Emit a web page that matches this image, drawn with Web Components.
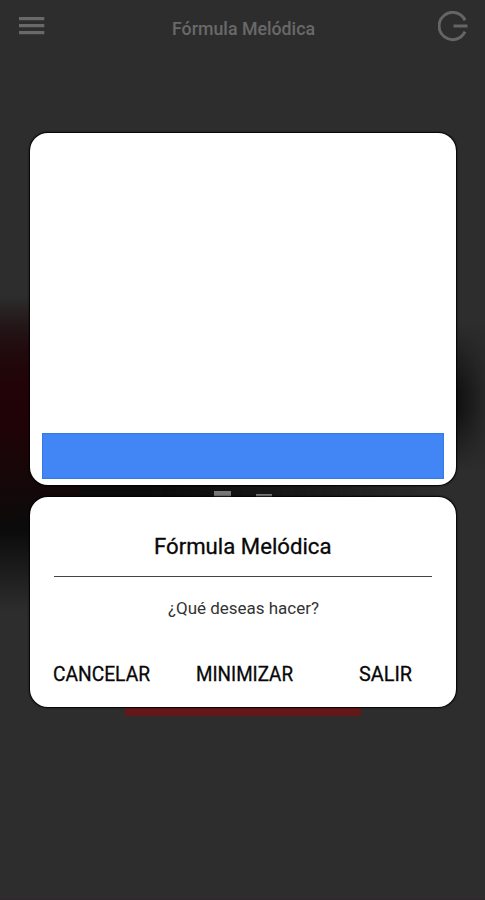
<!DOCTYPE html>
<html lang="es">
<head>
<meta charset="utf-8">
<title>Fórmula Melódica</title>
<style>
body{margin:0;background:#2d2d2d;font-family:Roboto,"Liberation Sans",sans-serif;overflow:hidden}
</style>
</head>
<body>
<radio-app></radio-app>
<script>
const define = (name, html, init) => customElements.define(name, class extends HTMLElement {
  constructor(){
    super();
    const t = document.createElement('template');
    t.innerHTML = html;
    this.attachShadow({mode:'open'}).append(t.content.cloneNode(true));
  }
  connectedCallback(){ if(init) init(this, this.shadowRoot); }
});

// A single line of text fitted to a given width.
define('fit-text', `<style>:host{display:block}svg{display:block;overflow:visible}text{fill:currentColor;stroke:currentColor;stroke-width:var(--heft,0)}</style>
<svg><text x="0"></text></svg>`, (el, root) => {
  const w = el.getAttribute('width'), s = el.getAttribute('size');
  const svg = root.querySelector('svg'), t = root.querySelector('text');
  svg.setAttribute('width', w); svg.setAttribute('height', s);
  t.setAttribute('y', s * 0.86);
  t.setAttribute('font-size', s);
  t.setAttribute('font-weight', el.getAttribute('weight') || 400);
  t.setAttribute('textLength', w);
  t.setAttribute('lengthAdjust', 'spacingAndGlyphs');
  t.textContent = el.getAttribute('text');
});

define('menu-icon', `<style>:host{display:block;width:26px;height:18px}svg{display:block}</style>
<svg width="26" height="18" fill="#696969"><path d="M0 0h25.3v3.2H0zM0 7h25.3v3.2H0zM0 14h25.3v3.2H0z"/></svg>`);

define('exit-icon', `<style>:host{display:block;width:30px;height:31px}svg{display:block}</style>
<svg width="30" height="31" fill="none" stroke="#656565" stroke-width="3"><path d="M27 9.3A13.6 13.6 0 1 0 27 20.7M15.5 15h14"/></svg>`);

define('app-bar', `<style>
:host{display:flex;justify-content:space-between;align-items:flex-start;box-sizing:border-box;height:56px;padding:0 17px 0 19px;color:#696969}
menu-icon{margin-top:17px}exit-icon{margin-top:10.5px}fit-text{margin:20.3px 0 0 4px}
</style><menu-icon></menu-icon><fit-text text="Fórmula Melódica" size="17.6" width="143" weight="500"></fit-text><exit-icon></exit-icon>`);

// Darkened player screen showing behind the dialogs.
define('dimmed-scene', `<style>
:host{display:block;overflow:hidden;background:#2d2d2d;border-bottom:1px solid #30282c;box-sizing:border-box}
div{position:absolute}
.base{left:0;right:0;top:300px;height:310px;background:linear-gradient(#2d2d2d00,#0d0b0a 30%,#0b0b0b 74%,#2d2d2d00);-webkit-mask:linear-gradient(90deg,#000 30%,#0008 65%,transparent 90%)}
.red{left:0;width:80px;top:295px;height:235px;background:linear-gradient(#24000500,#240509b0 22%,#220408 38%,#200306 55%,#16050700)}
.dark{left:445px;right:0;top:325px;height:145px;background:linear-gradient(90deg,#080808,#08080800 120%);-webkit-mask:linear-gradient(transparent,#000 45%,#000 60%,transparent)}
.a{left:214px;top:491px;width:16.5px;height:8px;background:#777}
.b{left:256px;top:493.5px;width:16px;height:6px;background:#777}
.bar{left:125px;top:700px;width:236px;height:16px;background:#621818}
</style><div class="base"></div><div class="red"></div><div class="dark"></div><div class="a"></div><div class="b"></div><div class="bar"></div>`);

define('dialog-card', `<style>
:host{display:flex;flex-direction:column;box-sizing:border-box;background:#fff;border-radius:18px;box-shadow:0 0 1.5px .5px #000}
</style><slot></slot>`);

define('ad-banner', `<style>:host{display:block;height:46.5px;margin:auto 12px 6px;background:#4286f5;box-shadow:inset 0 0 1px 1px #347ce7}</style>`);

define('exit-prompt', `<style>
:host{display:flex;flex-direction:column;align-items:center;color:#080808}
.title{margin-top:38px;--heft:.3px}
hr{width:378px;height:1.5px;margin:18.7px 0 0;border:0;background:#454545}
.q{margin-top:23px;color:#333}
nav{display:grid;grid-template-columns:142.5px 163.5px auto;width:100%;box-sizing:border-box;padding-left:23px;margin-top:47.7px;--heft:.3px}
</style>
<fit-text class="title" text="Fórmula Melódica" size="22" width="177.5"></fit-text><hr>
<fit-text class="q" text="¿Qué deseas hacer?" size="16" width="151"></fit-text>
<nav><fit-text text="CANCELAR" size="20" width="97"></fit-text><fit-text text="MINIMIZAR" size="20" width="97"></fit-text><fit-text text="SALIR" size="20" width="53"></fit-text></nav>`);

define('radio-app', `<style>
:host{display:grid;width:485px;height:900px;grid-template:900px/485px}
dimmed-scene,main{grid-area:1/1}
dimmed-scene{position:relative}
main{position:relative;display:flex;flex-direction:column}
section{display:flex;flex-direction:column;gap:12px;padding:77px 29px 0 30px}
.ad{height:352px}.prompt{height:210px}
</style>
<dimmed-scene></dimmed-scene>
<main><app-bar></app-bar><section>
<dialog-card class="ad"><ad-banner></ad-banner></dialog-card>
<dialog-card class="prompt"><exit-prompt></exit-prompt></dialog-card>
</section></main>`);
</script>
</body>
</html>
